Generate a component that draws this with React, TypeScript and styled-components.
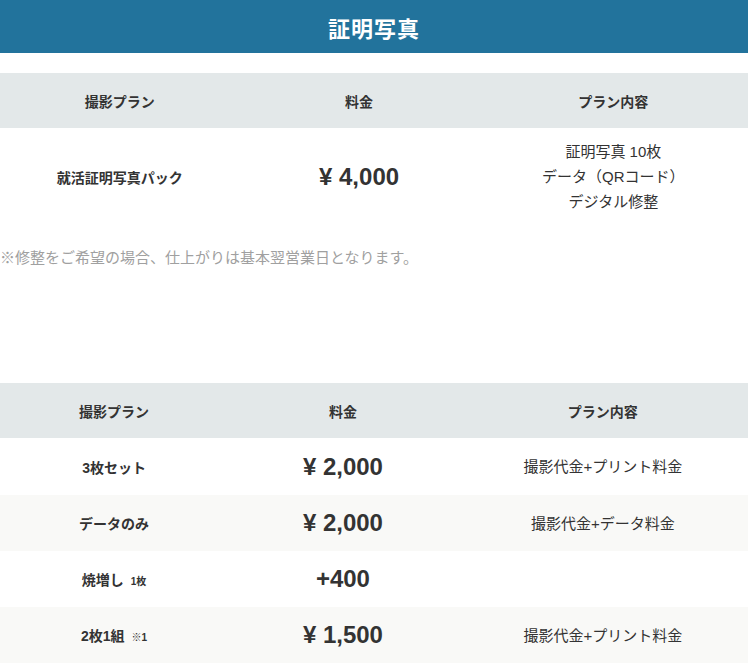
import React from 'react'
import styled, {createGlobalStyle} from 'styled-components'

const GlobalStyle = createGlobalStyle`
  body {
    margin: 0;
    background: #ffffff;
    color: #333333;
    font-family: 'Liberation Sans', 'Noto Sans CJK JP', sans-serif;
  }
`

interface PackRow {
  plan: string
  price: string
  details: string[]
}

interface PlanRow {
  plan: string
  note?: string
  price: string
  detail?: string
}

const packRows: PackRow[] = [
  {
    plan: '就活証明写真パック',
    price: '¥ 4,000',
    details: ['証明写真 10枚', 'データ（QRコード）', 'デジタル修整'],
  },
]

const planRows: PlanRow[] = [
  {plan: '3枚セット', price: '¥ 2,000', detail: '撮影代金+プリント料金'},
  {plan: 'データのみ', price: '¥ 2,000', detail: '撮影代金+データ料金'},
  {plan: '焼増し', note: '1枚', price: '+400'},
  {plan: '2枚1組', note: '※1', price: '¥ 1,500', detail: '撮影代金+プリント料金'},
]

const PACK_COLS = '32% 32% 36%'
const PLAN_COLS = '30.5% 30.7% 38.8%'

const App: React.FC = () => {
  return (
    <Page>
      <GlobalStyle />
      <TitleBar>
        <Title>証明写真</Title>
      </TitleBar>

      <PriceTable>
        <HeadRow $cols={PACK_COLS}>
          <HeadCell>撮影プラン</HeadCell>
          <HeadCell>料金</HeadCell>
          <HeadCell>プラン内容</HeadCell>
        </HeadRow>
        {packRows.map(row => (
          <Row key={row.plan} $cols={PACK_COLS} $height={97}>
            <PlanName>{row.plan}</PlanName>
            <Price>{row.price}</Price>
            <DetailList>
              {row.details.map(d => (
                <Detail key={d}>{d}</Detail>
              ))}
            </DetailList>
          </Row>
        ))}
      </PriceTable>

      <Note>※修整をご希望の場合、仕上がりは基本翌営業日となります。</Note>

      <PriceTable $spaced>
        <HeadRow $cols={PLAN_COLS}>
          <HeadCell>撮影プラン</HeadCell>
          <HeadCell>料金</HeadCell>
          <HeadCell>プラン内容</HeadCell>
        </HeadRow>
        {planRows.map((row, i) => (
          <Row key={row.plan} $cols={PLAN_COLS} $height={i === 0 ? 57 : 56} $shade={i % 2 === 1}>
            <PlanName>
              {row.plan}
              {row.note && <Small>{row.note}</Small>}
            </PlanName>
            <Price>{row.price}</Price>
            <Detail>{row.detail}</Detail>
          </Row>
        ))}
      </PriceTable>
    </Page>
  )
}

export default App

const Page = styled.div`
  width: 748px;
`

const TitleBar = styled.header`
  display: flex;
  justify-content: center;
  align-items: center;
  height: 53px;
  background-color: #22739c;
`

const Title = styled.h1`
  margin: 0;
  color: #ffffff;
  font-size: 22px;
  font-weight: bold;
  letter-spacing: 1px;
`

const PriceTable = styled.section<{$spaced?: boolean}>`
  display: flex;
  flex-direction: column;
  margin-top: ${props => (props.$spaced ? '115px' : '20px')};
`

const HeadRow = styled.div<{$cols: string}>`
  display: grid;
  grid-template-columns: ${props => props.$cols};
  align-items: center;
  height: 55px;
  background-color: #e3e8e9;
`

const HeadCell = styled.div`
  text-align: center;
  font-size: 14px;
  font-weight: bold;
  color: #333333;
`

const Row = styled.div<{$cols: string; $height: number; $shade?: boolean}>`
  display: grid;
  grid-template-columns: ${props => props.$cols};
  align-items: center;
  min-height: ${props => props.$height}px;
  background-color: ${props => (props.$shade ? '#f9f9f7' : '#ffffff')};
`

const PlanName = styled.div`
  text-align: center;
  font-size: 14px;
  font-weight: bold;
`

const Small = styled.span`
  margin-left: 7px;
  font-size: 10px;
`

const Price = styled.div`
  text-align: center;
  font-size: 24px;
  font-weight: bold;
`

const DetailList = styled.div`
  display: flex;
  flex-direction: column;
  align-items: center;
`

const Detail = styled.div`
  text-align: center;
  font-size: 15px;
  line-height: 25px;
`

const Note = styled.p`
  margin: 23px 0 0;
  font-size: 15px;
  line-height: 20px;
  color: #a0a0a0;
`
